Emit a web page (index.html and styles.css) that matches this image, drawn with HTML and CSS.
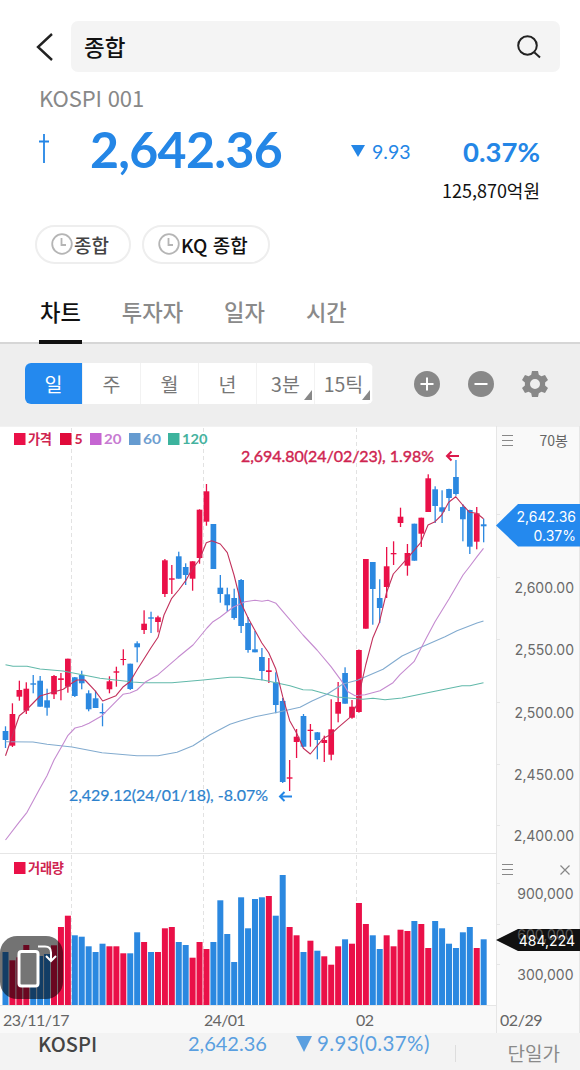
FILE: index.html
```
<!DOCTYPE html>
<html lang="ko">
<head>
  <meta charset="UTF-8">
  <title>종합 - KOSPI</title>
  <link rel="stylesheet" href="styles.css">
</head>
<body>
  <header class="top-bar">
    <svg class="back-icon" width="20" height="30" viewBox="0 0 20 30"><path d="M17 2L3 15l14 13"/></svg>
    <div class="search-box">
      <span>종합</span>
      <svg class="search-icon" width="26" height="26" viewBox="0 0 26 26"><circle cx="11.5" cy="11.5" r="9.3"/><path d="M18.5 18.5l5.5 5"/></svg>
    </div>
  </header>

  <section class="summary">
    <div class="code">KOSPI 001</div>
    <div class="price-row">
      <svg class="dagger" width="10" height="30" viewBox="0 0 10 30"><path d="M5 0v29M0 7.500h10"/></svg>
      <span class="price">2,642.36</span>
      <svg class="down" width="14" height="12" viewBox="0 0 14 12"><path d="M0 0h14L7 12z"/></svg>
      <span class="change">9.93</span>
      <span class="rate">0.37%</span>
    </div>
    <div class="amount">125,870억원</div>
  </section>

  <div class="recent">
    <button class="chip">
      <svg width="22" height="22" viewBox="0 0 22 22"><circle cx="11" cy="11" r="9.800"/><path d="M10.500 5v7H15"/></svg>
      <span>종합</span>
    </button>
    <button class="chip chip-dark">
      <svg width="22" height="22" viewBox="0 0 22 22"><circle cx="11" cy="11" r="9.800"/><path d="M10.500 5v7H15"/></svg>
      <span>KQ 종합</span>
    </button>
  </div>

  <nav class="tabs">
    <a class="tab active">차트</a>
    <a class="tab">투자자</a>
    <a class="tab">일자</a>
    <a class="tab">시간</a>
  </nav>

  <div class="toolbar">
    <div class="period">
      <button class="active">일</button>
      <button>주</button>
      <button>월</button>
      <button>년</button>
      <button class="more">3분</button>
      <button class="more">15틱</button>
    </div>
    <div class="tools">
      <svg width="26" height="26" viewBox="0 0 26 26"><circle cx="13" cy="13" r="13"/><path class="sign" d="M6.500 13h13M13 6.500v13"/></svg>
      <svg width="26" height="26" viewBox="0 0 26 26"><circle cx="13" cy="13" r="13"/><path class="sign" d="M6.500 13h13"/></svg>
      <svg width="26" height="26" viewBox="0 0 26 26"><path fill-rule="evenodd" d="M10 0h6l.8 3.700 2.600 1.500 3.600-1.300 3 5.200-2.900 2.500v2.800l2.900 2.500-3 5.200-3.600-1.300-2.600 1.500L16 26h-6l-.8-3.700-2.600-1.500L3 22.100l-3-5.200 2.900-2.500v-2.800L0 9.100l3-5.200 3.600 1.300 2.600-1.500zM13 8a5 5 0 1 0 0 10a5 5 0 1 0 0-10z"/></svg>
    </div>
  </div>

  <main class="chart">
    <svg id="chart" width="580" height="607" viewBox="0 426 580 607">
      <rect class="axis-bg" x="496" y="426" width="84" height="607"/>
      <rect class="axis-bg" x="0" y="1005" width="496" height="28"/>
      <path class="frame" d="M0 426h580M0 853.500h496M0 1005.500h496M496.500 426v607M579.500 426v607"/>
      <path class="frame" d="M496 514.500h4M496 577.500h4M496 639.500h4M496 702.500h4M496 764.500h4M496 825.500h4M496 883.500h4M496 924.500h4M496 964.500h4"/>
      <path class="month" d="M71.500 428v581M203.500 428v581M356.500 428v581"/>

      <g id="volumes"></g>
      <g id="candles"></g>
      <g id="averages"></g>

      <g class="legend">
        <rect class="up" x="14" y="433" width="11.500" height="12"/><text class="t-up" x="28" y="443.500" textLength="24">가격</text>
        <rect class="c5" x="60" y="433" width="11.500" height="12"/><text class="t-c5" x="74.500" y="444">5</text>
        <rect class="c20" x="90" y="433" width="11.500" height="12"/><text class="t-c20" x="104" y="444" textLength="17.500" lengthAdjust="spacingAndGlyphs">20</text>
        <rect class="c60" x="129" y="433" width="11.500" height="12"/><text class="t-c60" x="143" y="444" textLength="18" lengthAdjust="spacingAndGlyphs">60</text>
        <rect class="c120" x="168" y="433" width="11.500" height="12"/><text class="t-c120" x="182" y="444" textLength="25.500" lengthAdjust="spacingAndGlyphs">120</text>
        <rect class="up" x="14" y="862" width="11.500" height="12"/><text class="t-up" x="28" y="872.500" textLength="36">거래량</text>
      </g>

      <text class="note note-high" x="241" y="461.500" textLength="193">2,694.80(24/02/23), 1.98%</text>
      <path class="arrow arrow-high" d="M459 456h-12M451.500 451.500l-4.500 4.500 4.500 4.500"/>
      <text class="note note-low" x="69" y="801" textLength="199">2,429.12(24/01/18), -8.07%</text>
      <path class="arrow arrow-low" d="M292 796.500h-12M284.500 792l-4.500 4.500 4.500 4.500"/>

      <path class="menu" d="M502 435.500h11M502 440.500h11M502 445.500h11M502 864.500h11M502 869.500h11M502 874.500h11M560.500 865.500l9 9M569.500 865.500l-9 9"/>
      <text class="bars" x="539.500" y="445.500" textLength="28.500">70봉</text>
      <g class="scale">
        <text x="574" y="593">2,600.00</text>
        <text x="574" y="655">2,550.00</text>
        <text x="574" y="717.500">2,500.00</text>
        <text x="574" y="779.500">2,450.00</text>
        <text x="574" y="841">2,400.00</text>
        <text x="573.500" y="898.500">900,000</text>
        <text x="573.500" y="980">300,000</text>
      </g>

      <path class="tag-price" d="M496 525.500l22-21.500h62v42.500h-62z"/>
      <g class="scale tag-text">
        <text x="576" y="522">2,642.36</text>
        <text x="576" y="540.500">0.37%</text>
      </g>
      <path class="tag-volume" d="M496 940l22-11h62v22h-62z"/>
      <g class="scale tag-text">
        <text class="hidden-label" x="573.500" y="939.500">600,000</text>
        <text x="575" y="945.500">484,224</text>
      </g>

      <g class="dates">
        <text x="3" y="1026" textLength="66.500">23/11/17</text>
        <text x="204" y="1026" textLength="41.500">24/01</text>
        <text x="356" y="1026" textLength="18">02</text>
        <text x="500" y="1026" textLength="42.500">02/29</text>
      </g>
    </svg>

    <button class="rotate-btn">
      <svg width="63" height="63" viewBox="0 0 63 63"><rect x="19" y="15.500" width="19" height="34.500" rx="2.500"/><path d="M38 10.500h7q6 0 6 6v7.500M46 20l5 5 5-5"/></svg>
    </button>
  </main>

  <footer class="ticker">
    <span class="ticker-name">KOSPI</span>
    <span class="ticker-price">2,642.36</span>
    <svg width="16" height="16" viewBox="0 0 16 16"><path d="M0 0h16L8 16z"/></svg>
    <span class="ticker-change">9.93(0.37%)</span>
    <span class="ticker-type">단일가</span>
  </footer>

  <script src="chart.js"></script>
</body>
</html>
```
FILE: styles.css
```
:root {
  --blue: #2486e6;
  --red: #ea1048;
  --gray: #8a8a8a;
}

* {
  margin: 0;
  padding: 0;
  box-sizing: border-box;
}

body {
  width: 580px;
  height: 1070px;
  overflow: hidden;
  background: #fff;
  font-family: 'Noto Sans CJK KR', sans-serif;
  color: #111;
}

button {
  border: none;
  background: none;
  font-family: inherit;
}

svg {
  display: block;
  flex: none;
}

.top-bar {
  display: flex;
  align-items: center;
  padding: 21px 20px 0 35px;
}

.back-icon {
  margin-right: 16px;
  fill: none;
  stroke: #222;
  stroke-width: 2.4;
}

.search-box {
  flex: 1;
  height: 51px;
  padding: 0 18px 2px 13px;
  border-radius: 7px;
  background: #f4f4f4;
  display: flex;
  align-items: center;
  justify-content: space-between;
  font-size: 22.5px;
  font-weight: 500;
}

.search-icon {
  margin-top: 2px;
  fill: none;
  stroke: #222;
  stroke-width: 2;
}

.summary {
  height: 153px;
  padding: 10px 40px 0 39px;
}

.code {
  height: 35px;
  line-height: 31px;
  font-size: 22px;
  letter-spacing: -0.15px;
  color: #888;
}

.price-row {
  display: flex;
  align-items: center;
  height: 64px;
  font-family: Lato, sans-serif;
  color: var(--blue);
}

.dagger {
  margin: 0 41px 0 0;
  fill: none;
  stroke: var(--blue);
  stroke-width: 1.8;
}

.price {
  width: 261px;
  font-size: 50px;
  font-weight: 700;
  letter-spacing: -0.7px;
}

.down {
  margin-top: 3px;
  fill: var(--blue);
}

.change {
  margin-left: 7px;
  padding-top: 5px;
  font-size: 19.5px;
}

.rate {
  margin-left: auto;
  padding-top: 5px;
  font-size: 27.5px;
  font-weight: 700;
}

.amount {
  line-height: 18px;
  text-align: right;
  font-size: 18px;
  letter-spacing: 0;
}

.recent {
  display: flex;
  gap: 11px;
  padding-left: 35px;
}

.chip {
  display: flex;
  align-items: center;
  gap: 2px;
  height: 39px;
  padding: 0 19px 1px 14px;
  border: 2px solid #eee;
  border-radius: 20px;
  font-size: 19px;
  font-weight: 500;
  color: #444;
}

.chip svg {
  margin-right: -1px;
  fill: none;
  stroke: #b5b5b5;
  stroke-width: 1.8;
}

.chip span {
  padding-right: 1px;
}

.chip-dark {
  color: #111;
}

.tabs {
  display: flex;
  gap: 39px;
  height: 80px;
  padding: 0 39px;
  border-bottom: 2px solid #d6d6d6;
}

.tab {
  height: 80px;
  padding: 27px 1px 0;
  line-height: 40px;
  font-size: 22.2px;
  font-weight: 500;
  color: var(--gray);
}

.tab.active {
  border-bottom: 4px solid #111;
  color: #111;
}

.toolbar {
  display: flex;
  align-items: center;
  justify-content: space-between;
  height: 82px;
  padding: 0 32px 3px 25px;
  background: #eee;
}

.period {
  display: flex;
  width: 348px;
  height: 41px;
  border-radius: 6px;
  overflow: hidden;
  background: #fff;
}

.period button {
  position: relative;
  flex: 1;
  border-right: 1px solid #f2f2f2;
  font-size: 19.5px;
  color: #777;
}

.period button.active {
  background: #2489ee;
  color: #fff;
}

.period .more::after {
  content: '';
  position: absolute;
  right: 2px;
  bottom: 4px;
  border-left: 8px solid transparent;
  border-bottom: 10px solid #888;
}

.tools {
  display: flex;
  gap: 28px;
  fill: #888;
}

.tools .sign {
  stroke: #fff;
  stroke-width: 2;
}

.chart {
  position: relative;
  height: 607px;
}

.axis-bg {
  fill: #f9f9f9;
}

.frame {
  fill: none;
  stroke: #e6e6e6;
}

.month {
  stroke: #e2e2e2;
  stroke-dasharray: 4 3;
}

.up { fill: var(--red); }
.down-bar { fill: #2b88e0; }
.c5 { fill: #e00a3a; }
.c20 { fill: #c565d2; }
.c60 { fill: #659bd0; }
.c120 { fill: #3cb39d; }

.average {
  fill: none;
  stroke-width: 1.1;
  stroke-linejoin: round;
}

.ma5 { stroke: #c2315c; }
.ma20 { stroke: #c58bd0; }
.ma60 { stroke: #82abcf; }
.ma120 { stroke: #62b9aa; }

.legend text {
  font-family: Lato, 'Noto Sans CJK KR', sans-serif;
  font-size: 14px;
  font-weight: 700;
}

.legend .t-up {
  font-size: 13.2px;
}

.t-up, .t-c5 { fill: #cf2450; }
.t-c20 { fill: #c77bd2; }
.t-c60 { fill: #6f9fd0; }
.t-c120 { fill: #45b29e; }

.note {
  font-family: Lato, sans-serif;
  font-size: 16px;
}

.note-high {
  fill: #cf2450;
  stroke: #cf2450;
  stroke-width: 0.4;
}

.note-low {
  fill: #2d82cd;
  stroke: #2d82cd;
  stroke-width: 0.2;
}

.arrow {
  fill: none;
  stroke-width: 2;
}

.arrow-high { stroke: #dc1a4b; }
.arrow-low { stroke: #2486e6; }

.menu {
  fill: none;
  stroke: #888;
  stroke-width: 1.2;
}

.bars {
  font-size: 14px;
  fill: #666;
}

.scale text {
  font-family: Inter, sans-serif;
  font-size: 14px;
  text-anchor: end;
  fill: #6a6a6a;
}

.tag-price { fill: #2489ee; }
.tag-volume { fill: #111; }
.tag-text text { fill: #fff; }
.tag-text .hidden-label { fill: #555; }

.dates text {
  font-family: Lato, sans-serif;
  font-size: 16px;
  fill: #666;
}

.rotate-btn {
  position: absolute;
  left: 0;
  top: 510px;
  width: 63px;
  height: 63px;
  border-radius: 17px;
  background: rgba(0, 0, 0, 0.55);
}

.rotate-btn svg {
  fill: none;
  stroke: #fff;
  stroke-width: 2;
}

.rotate-btn rect {
  fill: #757575;
  stroke-width: 3;
}

.ticker {
  display: flex;
  height: 37px;
  padding: 0 20px 0 38px;
  background: #f3f3f3;
  line-height: 21px;
  font-size: 20px;
  color: #5a9fe0;
}

.ticker svg {
  margin: 3px 5px 0 0;
  fill: #5a9fe0;
}

.ticker-name {
  width: 150px;
  font-weight: 500;
  color: #444;
}

.ticker-price {
  width: 108px;
}

.ticker-price, .ticker-change {
  font-family: Lato, sans-serif;
}

.ticker-change {
  font-size: 20.5px;
  letter-spacing: 0.4px;
}

.ticker-type {
  height: 17px;
  margin: 12px 0 0 auto;
  padding-left: 52px;
  border-left: 1px solid #ddd;
  line-height: 15px;
  font-size: 19px;
  color: var(--gray);
}
```
FILE: chart.js
```
const BASE = 1005;
const STEP = 6.93;
const START = 5.5;

// direction, high, body top, body bottom, low, top of the volume bar
const bars = [
  ['d', 726.3, 731, 740, 748, 952], ['u', 703.3, 714, 745.7, 747, 960.3], ['u', 680.7, 690, 696.7, 700.7, 957.3],
  ['u', 682.3, 688.7, 710.7, 714, 945], ['d', 675, 683.3, 684.7, 693.3, 956], ['d', 676, 680.7, 706.7, 706.7, 956],
  ['d', 688.7, 700.3, 707.7, 715.7, 954], ['u', 675, 676, 694.3, 699, 945.3], ['u', 673, 678.3, 680, 700.3, 927],
  ['u', 658.7, 658.7, 686.7, 692.7, 915.7], ['d', 677, 677.3, 696, 697, 935.3], ['d', 670.7, 675, 683.3, 689.3, 936.7],
  ['d', 690.3, 693.3, 709.3, 711.3, 946.3], ['d', 690.7, 698.3, 708, 708, 952], ['d', 703.3, 712, 713.3, 726.3, 943.7],
  ['u', 676.3, 681.3, 689.3, 693.3, 946.3], ['u', 666.7, 671.3, 672.7, 686.7, 946.3], ['u', 649.3, 659, 660, 665.3, 953.3],
  ['d', 663.7, 663.7, 689, 690, 953.3], ['d', 641.3, 643.3, 647.3, 662.3, 932.3], ['u', 610.3, 623.7, 630, 634, 942],
  ['d', 611.7, 617.3, 618.7, 633, 952], ['u', 615.7, 617.3, 622, 632.3, 952], ['u', 559, 560.3, 594, 597, 928.3],
  ['u', 565, 578.3, 579.7, 594, 927], ['d', 551.7, 556.3, 578.7, 578.7, 942], ['d', 563.3, 567, 575, 585, 945],
  ['u', 561.3, 561.3, 578.7, 590.7, 957.7], ['u', 509.3, 509.7, 558, 563.7, 942], ['u', 484, 491.3, 521.7, 525.7, 949],
  ['d', 524, 524, 569, 569, 942], ['d', 575, 587.7, 594, 602.7, 900.3], ['d', 587.7, 594.3, 605.3, 611.7, 934],
  ['d', 588.7, 598, 618, 619.7, 962], ['d', 579, 580, 626, 633, 897.3], ['d', 617, 623, 650, 652.7, 928.3],
  ['d', 631, 649.3, 652.3, 652.3, 899], ['d', 648, 657, 671, 680.3, 897.3], ['u', 658, 670.3, 672, 683, 896],
  ['d', 672.3, 682.3, 705, 713.3, 915.7], ['d', 698, 701, 782, 783, 875], ['u', 760, 777.3, 778.7, 791, 927],
  ['u', 729, 736.7, 742, 758, 935.3], ['d', 714, 716, 746.7, 747.3, 952], ['u', 724, 729.7, 731, 746.7, 940.7],
  ['d', 732, 732.3, 740, 759.3, 950.7], ['u', 735.7, 740, 743, 762, 956.3], ['u', 699.3, 729.3, 754.7, 760.3, 964.7],
  ['u', 682, 702, 713.7, 722.3, 946.3], ['d', 667.3, 673, 703.7, 703.7, 939.3], ['u', 700, 706.7, 717.7, 718.7, 943.7],
  ['u', 649.5, 650, 712, 712.7, 903], ['u', 559, 559, 628.7, 628.7, 924], ['d', 562, 562, 589, 624.7, 935.3],
  ['d', 579.3, 598, 608, 623, 949], ['u', 547, 566.3, 587, 598, 935.3], ['u', 541.3, 553, 554.3, 565, 946.3],
  ['u', 507.7, 516.7, 523, 527, 929.7], ['u', 544, 553, 565.7, 575.7, 931], ['d', 523.7, 523.7, 560.7, 560.7, 921],
  ['u', 517.7, 517.7, 533.7, 547, 924], ['u', 474.3, 478.3, 512, 512, 948], ['d', 486.3, 489.3, 506, 523, 921],
  ['d', 490.3, 507.3, 511.7, 523, 928.3], ['d', 488.7, 489, 498, 511, 943.7], ['d', 460, 477, 494, 495.7, 948],
  ['d', 504.3, 507, 519.3, 541.3, 932.3], ['d', 509.7, 510, 546.7, 554, 927], ['u', 507, 513.3, 541.7, 549.3, 948],
  ['d', 518.7, 524.3, 526.3, 542.3, 939.3]
];

const averages = {
  ma120: '5.5,664.7 13,666.3 27,666.3 40,669 63,671 100,678.3 133,682 143,682.7 172,682.7 203,680 230,677.3 240,677.3 263,680 290,685.7 303,689.7 312,690 337,697 363,699.3 373,698.3 385,699.7 402,698 430,692.3 462,685.7 470,685.7 483.5,682.7',
  ma60: '5.5,741.7 33,742 47,744.3 72,747 102,752.7 137,755.7 158,755.7 177,752.3 193,745.7 210,734.7 230,724.3 240,721 255,716.7 280,711.7 300,707.3 312,701 327,694.3 343,684 358,680 383,669.3 402,656 421,647.3 445,636.7 457,630.7 477,623 483.5,621',
  ma20: '5.5,840 19,822.3 27,812.3 40,788.3 47,775.7 54,760 62,746 68,735.3 75,728 82,726.3 89,723.3 102,715.7 123,694.3 130,693 137,690 145,682.3 158,674.7 178,657.3 193,645 207,628 213,621.7 220,617.3 233,607.3 245,601.7 255,600.3 262,601.3 268,600.3 276,603.3 283,611.7 303,635 317,650 331,666.7 342,681.7 348,691.7 355,695.7 365,694.7 380,690.7 393,682.7 400,674.7 414,661.7 427,636.7 435,621.7 449,599 463,575 470,566 477,556.7 483.5,548.3',
  ma5: '5.5,755.7 19.3,715.7 26.3,710 40,696 46.7,694 63.3,689.3 71.7,683.3 77,680 85,680 95,690.7 102.7,701 116,695.7 123.3,686.7 130,681.7 137,670 151,647.7 158,637.3 164,615 171.7,598.3 178.7,590 185.7,580.7 192.7,568.3 199.3,560 206.3,542.7 211.7,540.7 220.3,544 227.3,552.7 234,575 241,603 248,617.7 261.7,642.7 268.7,652.7 275.7,668.7 282.7,696.7 289.7,720.7 296.7,733.3 303.3,748.3 310.3,754 323.3,738.3 330,735 338,727.7 350,717.3 356.7,705 365.7,665 372.7,638.3 379.3,622.7 386.3,593.3 393.3,574 407.3,558.3 420.7,542.7 428,525 435,521.7 441.7,515 448.7,502.3 455.7,496.7 462.7,505 469.7,512.3 476.7,513.3 483.5,518.7'
};

let candles = '';
let volumes = '';

bars.forEach(([dir, high, top, bottom, low, volume], i) => {
  const x = START + STEP * i;
  const cls = dir === 'u' ? 'up' : 'down-bar';
  candles += `<rect class="${cls}" x="${x - 0.65}" y="${high}" width="1.3" height="${low - high}"/>`;
  candles += `<rect class="${cls}" x="${x - 2.85}" y="${top}" width="5.7" height="${bottom - top}"/>`;
  volumes += `<rect class="${cls}" x="${x - 3}" y="${volume}" width="6" height="${BASE - volume}"/>`;
});

document.getElementById('candles').innerHTML = candles;
document.getElementById('volumes').innerHTML = volumes;
document.getElementById('averages').innerHTML = Object.keys(averages)
  .map(name => `<polyline class="average ${name}" points="${averages[name]}"/>`)
  .join('');
```
